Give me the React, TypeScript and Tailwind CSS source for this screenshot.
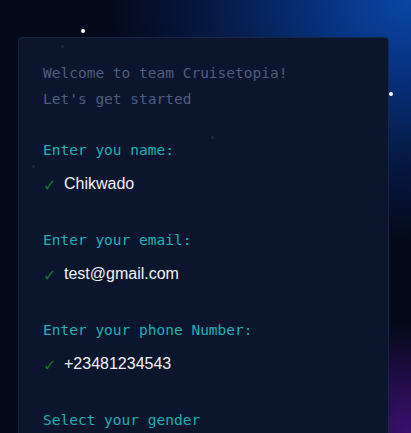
import React from "react";

const fields = [
  { label: "Enter you name:", value: "Chikwado" },
  { label: "Enter your email:", value: "test@gmail.com" },
  { label: "Enter your phone Number:", value: "+23481234543" },
];

function Field({ label, value }: { label: string; value: string }) {
  return (
    <div className="mb-[30px]">
      <div className="leading-[26px] text-[#17b3b5]">{label}</div>
      <div className="mt-[8px] flex h-[26px] items-center">
        <span className="w-[21px] translate-y-[2px] text-[16px] leading-none text-[#0e7d22] font-['DejaVu_Sans',sans-serif]">✓</span>
        <span className="text-[16px] leading-[26px] text-[#f1f3f8] font-['Liberation_Sans',Arial,sans-serif]">{value}</span>
      </div>
    </div>
  );
}

export default function App() {
  return (
    <div className="relative h-[433px] w-full overflow-hidden bg-[#040a1b] [background:radial-gradient(ellipse_300px_240px_at_100%_0%,#0a46a6_0%,#07327f_30%,#061c4a_62%,transparent_100%),radial-gradient(ellipse_120px_110px_at_100%_100%,#3d0f70_0%,transparent_100%),#040a1b]">
      {/* stars */}
      <div className="absolute left-[81px] top-[29px] h-[4px] w-[4px] rounded-full bg-white" />
      <div className="absolute left-[389px] top-[92px] h-[4px] w-[4px] rounded-full bg-white" />

      <div className="relative ml-[18px] mt-[37px] h-[420px] w-[371px] rounded-[4px] border border-[#1a2646] bg-[#0b152e] pl-[24px] pt-[22px] font-['DejaVu_Sans_Mono',monospace] text-[14.5px]">
        <div className="absolute left-[42px] top-[7px] h-[3px] w-[3px] rounded-full bg-[#1c2a48]" />
        <div className="absolute left-[192px] top-[98px] h-[3px] w-[3px] rounded-full bg-[#1c2a48]" />
        <div className="absolute left-[13px] top-[127px] h-[3px] w-[3px] rounded-full bg-[#1c2a48]" />

        <div className="leading-[26px] text-[#4f5e7e]">Welcome to team Cruisetopia!</div>
        <div className="leading-[26px] text-[#4f5e7e]">Let's get started</div>

        <div className="mt-[25px]">
          {fields.map((f) => (
            <Field key={f.label} label={f.label} value={f.value} />
          ))}
          <div className="leading-[26px] text-[#17b3b5]">Select your gender</div>
        </div>
      </div>
    </div>
  );
}
